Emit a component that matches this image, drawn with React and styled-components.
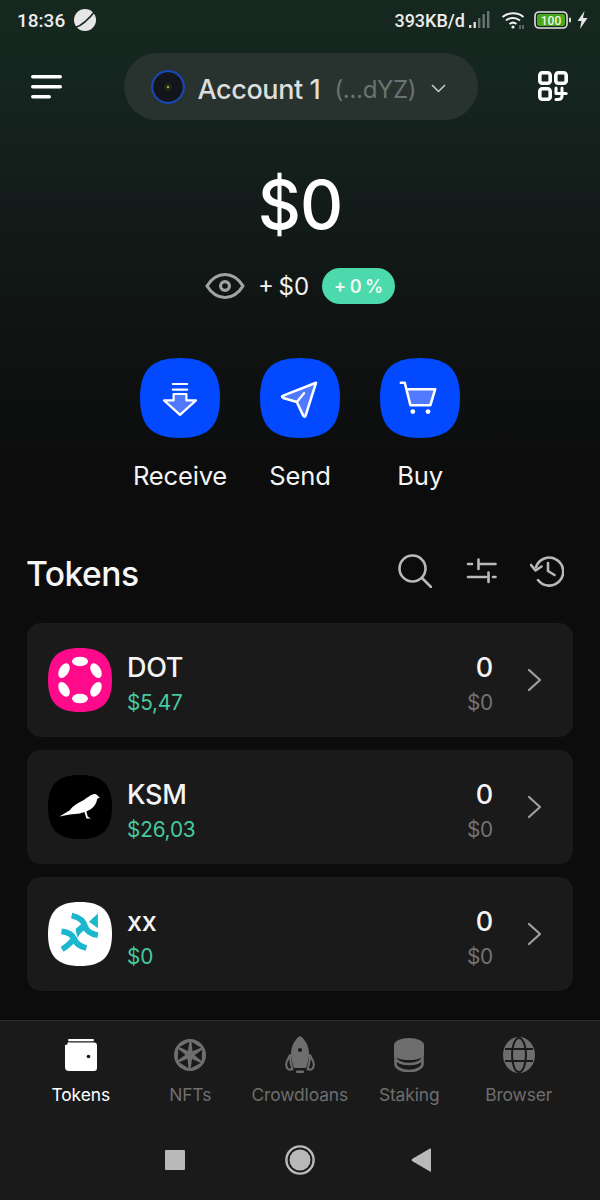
import React from "react";
import styled, { createGlobalStyle } from "styled-components";

const Global = createGlobalStyle`
  html, body { margin: 0; padding: 0; background: #0c0c0c; }
  * { box-sizing: border-box; }
`;
const FONT = `Inter, "Open Sans", sans-serif`;

const Page = styled.div`
  width: 600px; height: 1200px; display: flex; flex-direction: column; overflow: hidden;
  font-family: ${FONT}; color: #fff;
  background: linear-gradient(180deg, #15281f 0, #15251f 80px, #131c1a 200px, #0f1312 340px, #0c0c0c 480px);
`;
const StatusBar = styled.div`
  height: 40px; padding: 0 12px 0 17px; display: flex; align-items: center; justify-content: space-between;
  font-family: Roboto, sans-serif; font-weight: 500; font-size: 18px; color: #ececec;
`;
const StatusGroup = styled.div`display: flex; align-items: center;`;
const Clock = styled.span`font-size: 19px;`;
const Header = styled.div`
  height: 67px; margin-top: 13px; padding: 0 32px 0 31px; display: flex; align-items: center; justify-content: space-between;
`;
const Pill = styled.div`
  width: 354px; height: 67px; border-radius: 34px; background: #28332f; display: flex; align-items: center; padding-left: 27px;
`;
const AccountName = styled.span`font-size: 27px; font-weight: 500; color: #dcdedd; margin-left: 13px; padding-top: 6px; letter-spacing: -0.4px;`;
const AccountAddr = styled.span`font-size: 24px; color: #69736f; margin-left: 14px; padding-top: 6px; letter-spacing: -0.3px;`;
const Chevron = styled.span`display: flex; margin-left: 15px; padding-top: 3px;`;
const Balance = styled.div`
  margin-top: 47px; text-align: center; font-size: 67px; line-height: 76px; font-weight: 500; letter-spacing: -1px;
`;
const ChangeRow = styled.div`
  margin-top: 25px; height: 36px; display: flex; align-items: center; justify-content: center; gap: 13px;
`;
const ChangeValue = styled.span`font-size: 24px; color: #f2f2f2; word-spacing: -2px;`;
const ChangeBadge = styled.span`
  width: 73px; height: 36px; border-radius: 18px; background: #4cd9ac; display: flex; align-items: center; justify-content: center;
  font-size: 18px; font-weight: 600; color: #eefaf5; word-spacing: -1px;
`;
const Actions = styled.div`margin-top: 54px; display: flex; justify-content: center; gap: 40px;`;
const Action = styled.div`width: 80px; display: flex; flex-direction: column; align-items: center; gap: 22px;`;
const ActionLabel = styled.span`font-size: 25.6px; line-height: 32px; white-space: nowrap; color: #f4f4f4; letter-spacing: -0.2px;`;
const TokensHead = styled.div`
  margin-top: 59px; height: 40px; padding: 0 36px 0 26px; display: flex; align-items: center; justify-content: space-between;
`;
const TokensTitle = styled.h2`margin: 0; padding-top: 4px; font-size: 33.6px; font-weight: 500; letter-spacing: -0.5px; color: #f6f6f6;`;
const Tools = styled.div`display: flex; align-items: center; gap: 33px;`;
const List = styled.div`margin-top: 32px; padding: 0 27px; display: flex; flex-direction: column; gap: 13.5px;`;
const Card = styled.div`
  height: 113.5px; border-radius: 14px; background: #1a1a1a; display: flex; align-items: center; padding: 0 31px 0 21px;
`;
const TokenInfo = styled.div`margin-left: 15px; padding-top: 10px; flex: 1; display: flex; flex-direction: column; gap: 5px;`;
const TokenAmount = styled.div`margin-right: 34px; padding-top: 10px; display: flex; flex-direction: column; align-items: flex-end; gap: 5px;`;
const Big = styled.span`font-size: 27px; line-height: 32px; font-weight: 500; color: #f4f4f4; letter-spacing: -0.3px;`;
const Small = styled.span`font-size: 20.8px; line-height: 28px; color: ${p => p.$green ? "#47c9a0" : "#737373"}; letter-spacing: -0.2px;`;
const BottomBar = styled.div`
  margin-top: auto; height: 180px; background: #1a1a1a; border-top: 1px solid #2a2a2a; display: flex; flex-direction: column;
`;
const Nav = styled.div`margin-top: 18px; padding-left: 26px; display: flex;`;
const NavItem = styled.div`width: 109.5px; display: flex; flex-direction: column; align-items: center; gap: 12px;`;
const NavLabel = styled.span`font-size: 17.4px; line-height: 24px; white-space: nowrap; letter-spacing: -0.1px; color: ${p => p.$active ? "#fff" : "#6e6e6e"};`;
const SysNav = styled.div`margin-top: 38px; display: flex; align-items: center; justify-content: center; gap: 100px; padding-right: 4px;`;
const BackSlot = styled.div`display: flex; margin-left: -4px;`;
const IconHolder = styled.div`width: 32px; height: 32px; flex: none; display: flex; justify-content: center;`;

const SQ = "M50 0C85 0 100 15 100 50C100 85 85 100 50 100C15 100 0 85 0 50C0 15 15 0 50 0Z";

const Planet = () => (
  <svg width="24" height="24" viewBox="0 0 24 24" style={{ marginLeft: 8 }}>
    <circle cx="12" cy="12" r="11" fill="#e6e6e6" />
    <path d="M1.5 20C8 18 16 11 23 2" stroke="#15281f" strokeWidth="1.6" fill="none" />
  </svg>
);
const Signal = () => (
  <svg width="22" height="22" viewBox="0 0 22 22" style={{ marginLeft: 3 }}>
    <rect x="1" y="16" width="2.4" height="3" fill="#ddd" />
    <rect x="5.5" y="13" width="2.4" height="6" fill="#ddd" />
    <rect x="10" y="9" width="2.4" height="10" fill="#6a7370" />
    <rect x="14.5" y="5" width="2.4" height="14" fill="#6a7370" />
    <rect x="19" y="2" width="2.4" height="17" fill="#6a7370" />
  </svg>
);
const Wifi = () => (
  <svg width="24" height="20" viewBox="0 0 24 20" fill="none" stroke="#eee" strokeWidth="2" style={{ marginLeft: 11 }}>
    <path d="M1.5 7C7 2 17 2 22.5 7" />
    <path d="M5 10.5C9 7 15 7 19 10.5" />
    <path d="M8.5 14C10.5 12.4 13.5 12.4 15.5 14" />
    <circle cx="12" cy="17" r="1.6" fill="#eee" stroke="none" />
    <path d="M19 15V19M22 15V19" strokeWidth="1" stroke="#aaa" />
  </svg>
);
const Battery = () => (
  <svg width="38" height="18" viewBox="0 0 38 18" style={{ marginLeft: 9 }}>
    <rect x="1" y="1" width="32" height="16" rx="4" fill="none" stroke="#e4e4e4" strokeWidth="1.6" />
    <rect x="3" y="3" width="28" height="12" rx="2" fill="#4aa51f" />
    <rect x="35" y="6.5" width="2" height="5" rx="1" fill="#ddd" />
    <text x="17" y="13.6" textAnchor="middle" fontFamily="Roboto, sans-serif" fontSize="12" fontWeight="500" fill="#eaf5e2">100</text>
  </svg>
);
const Bolt = () => (
  <svg width="11" height="18" viewBox="0 0 11 18" style={{ marginLeft: 5 }}>
    <path d="M7.5 0L0.5 10H4.5L3 18L10.5 7H6Z" fill="#e6e6e6" />
  </svg>
);
const Burger = () => (
  <svg width="32" height="26" viewBox="0 0 32 26" style={{ display: "block", marginTop: 1 }}>
    <rect x="0" y="1" width="31" height="3.6" rx="1.8" fill="#fff" />
    <rect x="0" y="11" width="31" height="3.6" rx="1.8" fill="#fff" />
    <rect x="0" y="21" width="20" height="3.6" rx="1.8" fill="#fff" />
  </svg>
);
const Avatar = () => (
  <svg width="34" height="34" viewBox="0 0 34 34">
    <circle cx="17" cy="17" r="15.8" fill="#12161a" stroke="#1a46b0" strokeWidth="2.2" />
    <circle cx="17" cy="17" r="4" fill="#1b2416" />
    <circle cx="17" cy="17" r="1.3" fill="#8fa648" />
  </svg>
);
const Down = () => (
  <svg width="15" height="9" viewBox="0 0 15 9" fill="none" stroke="#c9cdcb" strokeWidth="1.5">
    <path d="M1 1L7.5 7.5L14 1" />
  </svg>
);
const QR = () => (
  <svg width="30" height="30" viewBox="0 0 30 30" fill="none" stroke="#fff" strokeWidth="3.6" style={{ display: "block", marginTop: -1 }}>
    <rect x="1.8" y="1.8" width="10.4" height="10.4" rx="2.5" />
    <rect x="17.8" y="1.8" width="10.4" height="10.4" rx="2.5" />
    <rect x="1.8" y="17.8" width="10.4" height="10.4" rx="2.5" />
    <path d="M18 17V22.5H28.2M24 17V25Q24 28.5 20 28.5H18" strokeLinecap="round" strokeLinejoin="round" strokeWidth="3" />
  </svg>
);
const Eye = () => (
  <svg width="40" height="28" viewBox="0 0 40 28" fill="none" stroke="#a3a3a3" strokeWidth="3.2">
    <path d="M2 14C7 6 13 2.5 20 2.5S33 6 38 14C33 22 27 25.5 20 25.5S7 22 2 14Z" strokeLinejoin="round" />
    <circle cx="20" cy="14" r="4.4" />
  </svg>
);
const Squircle = ({ size, fill, children }) => (
  <svg width={size} height={size} viewBox="0 0 100 100" style={{ display: "block", flex: "none" }}>
    <path d={SQ} fill={fill} />
    {children}
  </svg>
);
const iconStroke = { fill: "none", stroke: "#fff", strokeWidth: 2.8, strokeLinejoin: "round", strokeLinecap: "round" };
const ReceiveIcon = () => (
  <Squircle size={80} fill="#0249ff">
    <path d="M42 45H58V53H70L50 71L30 53H42Z" {...iconStroke} fill="#4f79ff" />
    <path d="M41 32.5H59M41 39.5H59" {...iconStroke} />
  </Squircle>
);
const SendIcon = () => (
  <Squircle size={80} fill="#0249ff">
    <path d="M70 31L57 72Q56 75 54 72L46 55L29 50Q26 48 29 47Z" {...iconStroke} fill="#4f79ff" strokeWidth="3.2" />
    <path d="M46 55L55 44" {...iconStroke} />
  </Squircle>
);
const BuyIcon = () => (
  <Squircle size={80} fill="#0249ff">
    <path d="M33 39H69L63 59H38Z" fill="#4f79ff" />
    <path d="M26 31H31L38 59H63L69 39H33" {...iconStroke} strokeWidth="3.2" />
    <circle cx="41" cy="67" r="3" fill="#fff" />
    <circle cx="60" cy="67" r="3" fill="#fff" />
  </Squircle>
);
const Search = () => (
  <svg width="34" height="34" viewBox="0 0 34 34" fill="none" stroke="#b9b9b9" strokeWidth="2.6" strokeLinecap="round">
    <circle cx="14.5" cy="14.5" r="13" />
    <path d="M24 24L33 33" />
  </svg>
);
const Sliders = () => (
  <svg width="32" height="26" viewBox="0 0 32 26" fill="none" stroke="#b9b9b9" strokeWidth="2.6" strokeLinecap="round">
    <path d="M3 6H7M14 6H30.5M13.5 1.5V11" />
    <path d="M3 19H21M28 19H30.5M23.5 14.5V24" />
  </svg>
);
const History = () => (
  <svg width="34" height="32" viewBox="0 0 34 32" fill="none" stroke="#b9b9b9" strokeWidth="2.6" strokeLinecap="round" strokeLinejoin="round">
    <path d="M6 12A14 14 0 1 1 8 25" />
    <path d="M1 10L5.5 15.5L11.5 11.5" />
    <path d="M18 8V16L24.5 20" />
  </svg>
);
const Dot = () => (
  <Squircle size={64} fill="#ff0a8a">
    <g fill="#fff">
      <ellipse cx="50" cy="21" rx="12.5" ry="7.5" />
      <ellipse cx="50" cy="79" rx="12.5" ry="7.5" />
      <ellipse cx="25" cy="35.5" rx="12.5" ry="7.5" transform="rotate(-60 25 35.5)" />
      <ellipse cx="75" cy="35.5" rx="12.5" ry="7.5" transform="rotate(60 75 35.5)" />
      <ellipse cx="25" cy="64.5" rx="12.5" ry="7.5" transform="rotate(60 25 64.5)" />
      <ellipse cx="75" cy="64.5" rx="12.5" ry="7.5" transform="rotate(-60 75 64.5)" />
    </g>
  </Squircle>
);
const Ksm = () => (
  <Squircle size={64} fill="#000">
    <path d="M18 65L34 55C40 47 48 43 56 39C62 35 66 31 71 30C75 29 77 31 78 33L81 35L77 37C76 44 72 50 66 54L60 57L62 65L67 68H60L57 58L50 60C40 61 28 62 18 65Z" fill="#fff" />
  </Squircle>
);
const Xx = () => (
  <Squircle size={64} fill="#fff">
    <g fill="none" stroke="#1cb6ce" strokeWidth="9">
      <path d="M37 21C50 24 56 30 58 38C60 46 66 50 78 52" />
      <path d="M21 46C30 47 38 50 41 58C44 66 52 70 60 72" />
      <path d="M22 74C32 68 38 62 42 54" />
    </g>
    <path d="M43 42L54 33L58 42L50 50L46 56Z" fill="#1cb6ce" />
    <path d="M78 18V41L64 31Z" fill="#1cb6ce" />
  </Squircle>
);
const RowChevron = () => (
  <svg width="15" height="24" viewBox="0 0 15 24" fill="none" stroke="#a0a0a0" strokeWidth="2.2" strokeLinecap="round" strokeLinejoin="round">
    <path d="M2 2L13 12L2 22" />
  </svg>
);
const Wallet = () => (
  <svg width="32" height="32" viewBox="0 0 32 32" style={{ display: "block" }}>
    <rect x="3" y="0" width="26" height="2.2" rx="1.1" fill="#fff" />
    <path d="M2.5 5.5C2 3 4 3 5 3.5H29Q32 3.5 32 6.5V29Q32 32 29 32H4Q0 32 0 28V6Z" fill="#fff" />
    <circle cx="23.5" cy="17.5" r="1.8" fill="#1a1a1a" />
  </svg>
);
const blades = [0, 60, 120, 180, 240, 300];
const Aperture = () => (
  <svg width="32" height="32" viewBox="0 0 32 32">
    <circle cx="16" cy="16" r="16" fill="#6e6e6e" />
    {blades.map(a => (
      <path key={a} d="M17.5 2.8L27 8.8L18.5 12.2Z" fill="#1a1a1a" transform={`rotate(${a} 16 16)`} />
    ))}
  </svg>
);
const Rocket = () => (
  <svg width="30" height="38" viewBox="0 0 30 38" fill="#6e6e6e" style={{ display: "block", marginTop: -3 }}>
    <path d="M15 0C20 3 24 10 24 18C24 23 22.5 28 21 32H9C7.5 28 6 23 6 18C6 10 10 3 15 0Z" />
    <circle cx="15" cy="14" r="2.1" fill="#1a1a1a" />
    <path d="M5 19L2 25C0.5 29 1.5 32 3.5 33.5H7.5L5.5 26Z" fill="none" stroke="#6e6e6e" strokeWidth="2" strokeLinejoin="round" />
    <path d="M25 19L28 25C29.5 29 28.5 32 26.5 33.5H22.5L24.5 26Z" fill="none" stroke="#6e6e6e" strokeWidth="2" strokeLinejoin="round" />
    <rect x="11" y="34.5" width="8" height="2.6" rx="1" />
  </svg>
);
const Database = () => (
  <svg width="30" height="34" viewBox="0 0 30 34" fill="#6e6e6e" style={{ display: "block", marginTop: -1 }}>
    <path d="M0 7C0 3 7 0 15 0S30 3 30 7V16C30 20 23 22 15 22S0 20 0 16Z" />
    <path d="M1.5 17V26C1.5 30 8 33 15 33S28.5 30 28.5 26V17" fill="none" stroke="#6e6e6e" strokeWidth="2.6" />
    <path d="M1.5 21C4 24.5 9 26 15 26S26 24.5 28.5 21" fill="none" stroke="#6e6e6e" strokeWidth="2.6" />
  </svg>
);
const Globe = () => (
  <svg width="32" height="36" viewBox="0 0 32 36" style={{ display: "block", marginTop: -2 }}>
    <ellipse cx="16" cy="18" rx="16" ry="18" fill="#6e6e6e" />
    <g fill="none" stroke="#1a1a1a" strokeWidth="2">
      <ellipse cx="16" cy="18" rx="7" ry="17" />
      <path d="M2 12H30M2 24H30" />
    </g>
  </svg>
);
const StopIcon = () => (
  <svg width="20" height="20" viewBox="0 0 20 20"><rect width="20" height="20" rx="1" fill="#b9b9b9" /></svg>
);
const HomeIcon = () => (
  <svg width="30" height="30" viewBox="0 0 30 30">
    <circle cx="15" cy="15" r="13.6" fill="none" stroke="#b9b9b9" strokeWidth="2.4" />
    <circle cx="15" cy="15" r="10.5" fill="#b9b9b9" />
  </svg>
);
const BackIcon = () => (
  <svg width="20" height="24" viewBox="0 0 20 24"><path d="M20 1V23Q20 24 19 23.4L1 13Q0 12 1 11L19 .6Q20 0 20 1Z" fill="#b9b9b9" /></svg>
);

const tokens = [
  { name: "DOT", price: "$5,47", Icon: Dot },
  { name: "KSM", price: "$26,03", Icon: Ksm },
  { name: "xx", price: "$0", Icon: Xx },
];
const actions = [
  { label: "Receive", Icon: ReceiveIcon },
  { label: "Send", Icon: SendIcon },
  { label: "Buy", Icon: BuyIcon },
];
const navs = [
  { label: "Tokens", Icon: Wallet, active: true },
  { label: "NFTs", Icon: Aperture },
  { label: "Crowdloans", Icon: Rocket },
  { label: "Staking", Icon: Database },
  { label: "Browser", Icon: Globe },
];

export default function App() {
  return (
    <Page>
      <Global />
      <StatusBar>
        <StatusGroup><Clock>18:36</Clock><Planet /></StatusGroup>
        <StatusGroup>393KB/d<Signal /><Wifi /><Battery /><Bolt /></StatusGroup>
      </StatusBar>
      <Header>
        <Burger />
        <Pill>
          <Avatar />
          <AccountName>Account 1</AccountName>
          <AccountAddr>(...dYZ)</AccountAddr>
          <Chevron><Down /></Chevron>
        </Pill>
        <QR />
      </Header>
      <Balance>$0</Balance>
      <ChangeRow>
        <Eye />
        <ChangeValue>+ $0</ChangeValue>
        <ChangeBadge>+ 0 %</ChangeBadge>
      </ChangeRow>
      <Actions>
        {actions.map(({ label, Icon }) => (
          <Action key={label}><Icon /><ActionLabel>{label}</ActionLabel></Action>
        ))}
      </Actions>
      <TokensHead>
        <TokensTitle>Tokens</TokensTitle>
        <Tools><Search /><Sliders /><History /></Tools>
      </TokensHead>
      <List>
        {tokens.map(({ name, price, Icon }) => (
          <Card key={name}>
            <Icon />
            <TokenInfo><Big>{name}</Big><Small $green>{price}</Small></TokenInfo>
            <TokenAmount><Big>0</Big><Small>$0</Small></TokenAmount>
            <RowChevron />
          </Card>
        ))}
      </List>
      <BottomBar>
        <Nav>
          {navs.map(({ label, Icon, active }) => (
            <NavItem key={label}>
              <IconHolder><Icon /></IconHolder>
              <NavLabel $active={active}>{label}</NavLabel>
            </NavItem>
          ))}
        </Nav>
        <SysNav><StopIcon /><HomeIcon /><BackSlot><BackIcon /></BackSlot></SysNav>
      </BottomBar>
    </Page>
  );
}
